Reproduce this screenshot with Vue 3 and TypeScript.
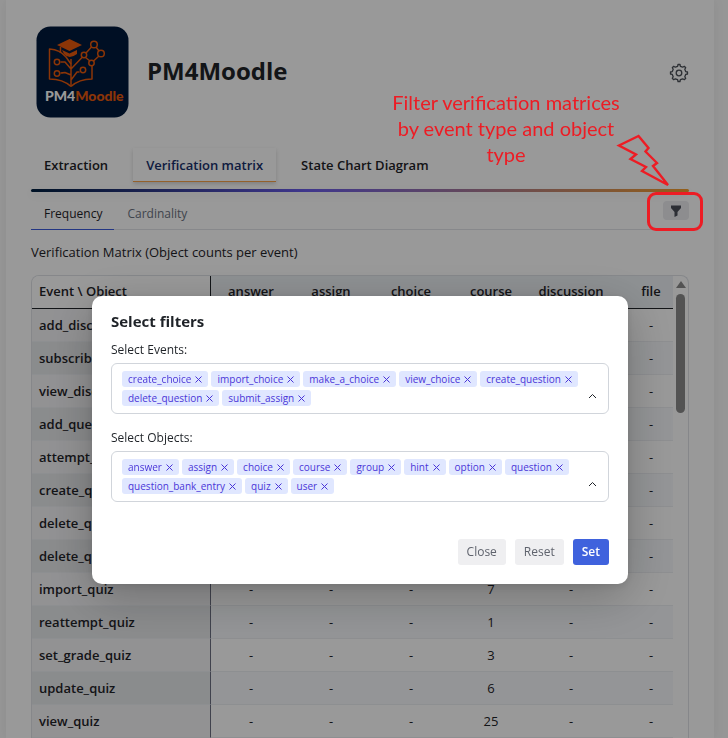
<script setup lang="ts">
import { ref } from 'vue'

interface MatrixRow {
  event: string
  counts: string[]
}

const mainTabs: string[] = ['Extraction', 'Verification matrix', 'State Chart Diagram']
const activeMain = ref('Verification matrix')

const subTabs: string[] = ['Frequency', 'Cardinality']
const activeSub = ref('Frequency')

const objectTypes: string[] = ['answer', 'assign', 'choice', 'course', 'discussion', 'file']

const courseCounts: [string, string][] = [
  ['add_discussion', '-'],
  ['subscribe_forum', '-'],
  ['view_discussion', '-'],
  ['add_question', '-'],
  ['attempt_quiz', '-'],
  ['create_quiz', '-'],
  ['delete_question', '-'],
  ['delete_quiz', '-'],
  ['import_quiz', '7'],
  ['reattempt_quiz', '1'],
  ['set_grade_quiz', '3'],
  ['update_quiz', '6'],
  ['view_quiz', '25'],
]

const rows: MatrixRow[] = courseCounts.map(([event, course]) => ({
  event,
  counts: objectTypes.map((type) => (type === 'course' ? course : '-')),
}))

const defaultEvents: string[] = [
  'create_choice',
  'import_choice',
  'make_a_choice',
  'view_choice',
  'create_question',
  'delete_question',
  'submit_assign',
]
const defaultObjects: string[] = [
  'answer',
  'assign',
  'choice',
  'course',
  'group',
  'hint',
  'option',
  'question',
  'question_bank_entry',
  'quiz',
  'user',
]

const events = ref([...defaultEvents])
const objects = ref([...defaultObjects])
const dialogOpen = ref(true)

function reset(): void {
  events.value = [...defaultEvents]
  objects.value = [...defaultObjects]
}
</script>

<template>
  <div class="page">
    <main class="card">
      <header class="brand">
        <svg class="logo" viewBox="0 0 102 102" role="img" aria-label="PM4Moodle">
          <rect x="5.500" y="4.500" width="92" height="91" rx="14" fill="#00193c" />
          <g fill="none" stroke="#e8590c" stroke-width="1.500" stroke-linejoin="round">
            <path d="M40 64.500C34 59 26 57 18.500 57V27C25 27.500 31 30 35 35L40 42M40 64.500C46 59 54 57 61 57V43" />
            <path d="M40 64V37M40 53L34 50.500Q31 51 29.500 51M40 47L34 40H29.500M40 58L46 50H48.500M40 47L51.500 35" />
            <circle cx="26" cy="40" r="2.700" />
            <circle cx="26" cy="51.500" r="2.700" />
            <circle cx="52" cy="48" r="2.700" />
            <circle cx="53" cy="33" r="2.700" />
            <circle cx="63" cy="22.500" r="3.300" />
            <circle cx="70" cy="31.500" r="3.300" />
            <circle cx="60.500" cy="41" r="2.700" />
            <path d="M55 31L60.500 25M65 25L68 29M68 34L62.500 39M54.500 35.500L59 39" />
          </g>
          <path d="M26 23L38.500 17L51 23L38.500 29ZM31 28L38.500 31.500L46 28V32Q38 38 33 32Z" fill="#e8590c" />
          <path d="M29.500 25V31" stroke="#e8590c" stroke-width="1.500" />
          <text x="14" y="79" fill="#fff">PM4<tspan fill="#e8590c">Moodle</tspan></text>
        </svg>
        <h1>PM4Moodle</h1>
        <button class="gear" type="button" aria-label="Settings">
          <svg viewBox="0 0 20 20" width="20" height="20" fill="none" stroke="currentColor" stroke-width="1.300" stroke-linejoin="round">
            <path d="M8.600 3.300L9 1.500H11L11.400 3.300L13.700 4.200L15.300 3.300L16.700 4.700L15.800 6.300L16.700 8.600L18.500 9V11L16.700 11.400L15.800 13.700L16.700 15.300L15.300 16.700L13.700 15.800L11.400 16.700L11 18.500H9L8.600 16.700L6.300 15.800L4.700 16.700L3.300 15.300L4.200 13.700L3.300 11.400L1.500 11V9L3.300 8.600L4.200 6.300L3.300 4.700L4.700 3.300L6.300 4.200Z" />
            <circle cx="10" cy="10" r="2.800" />
          </svg>
        </button>
      </header>

      <nav class="tabs">
        <button
          v-for="tab in mainTabs"
          :key="tab"
          type="button"
          :class="{ active: tab === activeMain }"
          @click="activeMain = tab"
        >
          {{ tab }}
        </button>
      </nav>
      <div class="rule"></div>

      <div class="subbar">
        <button
          v-for="tab in subTabs"
          :key="tab"
          type="button"
          class="subtab"
          :class="{ active: tab === activeSub }"
          @click="activeSub = tab"
        >
          {{ tab }}
        </button>
        <button class="filter" type="button" aria-label="Filter" @click="dialogOpen = true">
          <svg viewBox="0 0 12 12" width="12" height="12" fill="currentColor">
            <path d="M1 .5h10v2.500L7.500 7v3.500L4.500 12V7L1 3z" />
          </svg>
        </button>
      </div>

      <p class="caption">Verification Matrix (Object counts per event)</p>

      <section class="matrix">
        <div class="viewport">
          <table>
            <thead>
              <tr>
                <th class="name" scope="col">Event \ Object</th>
                <th v-for="type in objectTypes" :key="type" scope="col">{{ type }}</th>
              </tr>
            </thead>
            <tbody>
              <tr v-for="row in rows" :key="row.event">
                <th class="name" scope="row">{{ row.event }}</th>
                <td v-for="(count, i) in row.counts" :key="i">{{ count }}</td>
              </tr>
            </tbody>
          </table>
        </div>
        <div class="scrollbar" aria-hidden="true">
          <span class="arrow"></span>
          <span class="thumb"></span>
        </div>
      </section>
    </main>

    <div v-if="dialogOpen" class="overlay">
      <section class="dialog" role="dialog" aria-modal="true" aria-labelledby="filters-title">
        <h2 id="filters-title">Select filters</h2>

        <p id="events-label" class="label">Select Events:</p>
        <div class="select" role="group" aria-labelledby="events-label">
          <ul>
            <li v-for="item in events" :key="item">
              {{ item }}
              <button type="button" :aria-label="'Remove ' + item" @click="events = events.filter((e) => e !== item)">
                <svg viewBox="0 0 7 7" width="7" height="7"><path d="M.5.500l6 6M6.500.500l-6 6" /></svg>
              </button>
            </li>
          </ul>
          <button class="chevron" type="button" aria-label="Toggle event options">
            <svg viewBox="0 0 9 6" width="9" height="6"><path d="M1 5l3.500-3.500L8 5" /></svg>
          </button>
        </div>

        <p id="objects-label" class="label">Select Objects:</p>
        <div class="select" role="group" aria-labelledby="objects-label">
          <ul>
            <li v-for="item in objects" :key="item">
              {{ item }}
              <button type="button" :aria-label="'Remove ' + item" @click="objects = objects.filter((o) => o !== item)">
                <svg viewBox="0 0 7 7" width="7" height="7"><path d="M.5.500l6 6M6.500.500l-6 6" /></svg>
              </button>
            </li>
          </ul>
          <button class="chevron" type="button" aria-label="Toggle object options">
            <svg viewBox="0 0 9 6" width="9" height="6"><path d="M1 5l3.500-3.500L8 5" /></svg>
          </button>
        </div>

        <footer>
          <button type="button" @click="dialogOpen = false">Close</button>
          <button type="button" @click="reset">Reset</button>
          <button type="button" class="primary" @click="dialogOpen = false">Set</button>
        </footer>
      </section>
    </div>

    <aside class="note">
      <p>Filter verification matrices by event type and object type</p>
      <svg class="bolt" viewBox="0 0 54 54" width="54" height="54">
        <path d="M22.500 3L3 12.500L20 21.500L14.500 26L30 34L26 38L52 52L37 33L41 30L29.500 18.500L32.500 15Z" />
      </svg>
      <span class="ring"></span>
    </aside>
  </div>
</template>

<style>
body {
  margin: 0;
  background: #fafafa;
}
</style>

<style scoped>
* {
  box-sizing: border-box;
}

.page {
  position: relative;
  height: 100vh;
  padding: 0 14px 0 6px;
  overflow: hidden;
  color: #1f2328;
  font: 13px/18px 'Open Sans', 'Noto Sans', sans-serif;
}

button {
  margin: 0;
  padding: 0;
  border: 0;
  background: none;
  color: inherit;
  font: inherit;
  cursor: pointer;
}

h1,
h2,
p,
ul {
  margin: 0;
  padding: 0;
}

.card {
  display: flex;
  flex-direction: column;
  height: 100%;
  padding: 22px 25px 0;
  background: #fff;
  box-shadow: 0 0 12px rgba(0, 0, 0, 0.06);
}

.brand {
  display: flex;
  align-items: center;
  gap: 14px;
  height: 102px;
}

.logo {
  width: 102px;
  height: 102px;
  font: 900 14px Lato, 'Open Sans', sans-serif;
}

h1 {
  flex: 1;
  padding-bottom: 4px;
  font-size: 24px;
  line-height: 32px;
  font-weight: 700;
}

.gear {
  display: flex;
  color: #4b5058;
}

.tabs {
  display: flex;
  gap: 12px;
  margin-top: 24px;
  font-weight: 600;
}

.tabs button {
  height: 34px;
  padding: 0 13px;
  border-bottom: 1px solid transparent;
  white-space: nowrap;
}

.tabs .active {
  color: #18306b;
  border-bottom-color: #f5a04a;
  box-shadow: 0 2px 4px rgba(0, 0, 0, 0.16);
}

.rule {
  flex: none;
  height: 3px;
  margin-top: 7px;
  border-radius: 2px;
  background: linear-gradient(90deg, #001f3f, #6a5cea 42%, #f59e2c);
  box-shadow: 0 3px 8px rgba(0, 0, 0, 0.08);
}

.subbar {
  display: flex;
  align-items: center;
  height: 38px;
  border-bottom: 1px solid #e1e3e8;
  font-size: 12px;
}

.subtab {
  align-self: stretch;
  margin-bottom: -1px;
  padding: 6px 12px 0 13px;
  border-bottom: 1px solid transparent;
  color: #6b7280;
}

.subtab.active {
  color: #1f2328;
  font-weight: 500;
  border-bottom-color: #3b5bdb;
}

.filter {
  display: grid;
  place-items: center;
  width: 26px;
  height: 19px;
  margin-left: auto;
  border-radius: 4px;
  background: #ebebef;
  color: #4b4f59;
}

.caption {
  margin: 13px 0 14px;
}

.matrix {
  display: flex;
  flex: 1;
  min-height: 0;
  border: 1px solid #dfe2e7;
  border-bottom: 0;
  border-radius: 8px 8px 0 0;
  overflow: hidden;
}

.viewport {
  flex: 1;
  overflow: hidden;
}

table {
  width: 659px;
  table-layout: fixed;
  border-collapse: separate;
  border-spacing: 0;
}

th,
td {
  width: 80px;
  height: 33px;
  padding: 0 0 1px;
  border-bottom: 1px solid #eceef2;
  text-align: center;
}

th {
  font-weight: 600;
}

thead th {
  padding-bottom: 2px;
  background: #edf1f5;
  border-bottom-color: #1f2328;
}

.name {
  width: 179px;
  padding-left: 7px;
  border-right: 1px solid #6b6f80;
  text-align: left;
}

thead .name {
  background: #fff;
  border-right-color: #1f2328;
}

tbody .name {
  background: #f4f4f6;
}

tbody tr:nth-child(even) {
  background: #f7f9fc;
}

tbody tr:nth-child(even) .name {
  background: #e7e9eb;
}

.scrollbar {
  display: flex;
  flex-direction: column;
  align-items: center;
  gap: 6px;
  width: 15px;
  padding-top: 5px;
}

.arrow {
  border: 5px solid transparent;
  border-top: 0;
  border-bottom: 7px solid #8b8b8b;
}

.thumb {
  width: 9px;
  height: 119px;
  border-radius: 5px;
  background: #8b8b8b;
}

.overlay {
  position: fixed;
  inset: 0;
  display: flex;
  align-items: flex-start;
  justify-content: center;
  padding: 296px 8px 0 0;
  background: rgba(0, 0, 0, 0.4);
}

.dialog {
  width: 536px;
  max-width: 100%;
  padding: 13px 19px 19px;
  border-radius: 10px;
  background: #fff;
  box-shadow: 0 12px 48px rgba(0, 0, 0, 0.25), 0 2px 8px rgba(0, 0, 0, 0.1);
}

h2 {
  font-size: 15px;
  line-height: 24px;
  font-weight: 700;
}

.label {
  margin: 8px 0 4px;
  font-size: 12px;
}

.select {
  display: flex;
  align-items: flex-end;
  min-height: 51px;
  padding: 7px 11px 7px 10px;
  border: 1px solid #d1d5db;
  border-radius: 6px;
}

.select + .label {
  margin-top: 15px;
}

ul {
  display: flex;
  flex: 1;
  flex-wrap: wrap;
  gap: 3px;
  list-style: none;
}

li {
  display: flex;
  align-items: center;
  gap: 4px;
  height: 16px;
  padding: 0 6px;
  border-radius: 3px;
  background: #e0e7ff;
  color: #4a36d8;
  font-size: 10px;
  line-height: 16px;
}

li button {
  display: flex;
}

li path,
.chevron path {
  fill: none;
  stroke: currentColor;
}

.chevron {
  display: flex;
  padding-bottom: 7px;
}

footer {
  display: flex;
  justify-content: flex-end;
  gap: 9px;
  margin-top: 37px;
}

footer button {
  height: 26px;
  padding: 0 9px;
  border-radius: 3px;
  background: #efeff1;
  color: #5f636d;
  font-size: 12px;
}

footer .primary {
  background: #3f62dd;
  color: #fff;
  font-weight: 600;
}

.note {
  position: absolute;
  top: 89px;
  right: 25px;
  width: 317px;
  height: 142px;
  color: #ed1c24;
  pointer-events: none;
}

.note p {
  width: 240px;
  font: 20px/26px Lato, sans-serif;
  text-align: center;
}

.bolt {
  position: absolute;
  top: 44px;
  right: 33px;
  fill: none;
  stroke: currentColor;
  stroke-width: 2.4;
}

.ring {
  position: absolute;
  right: 0;
  bottom: 0;
  width: 56px;
  height: 39px;
  border: 3px solid currentColor;
  border-radius: 9px;
}
</style>
